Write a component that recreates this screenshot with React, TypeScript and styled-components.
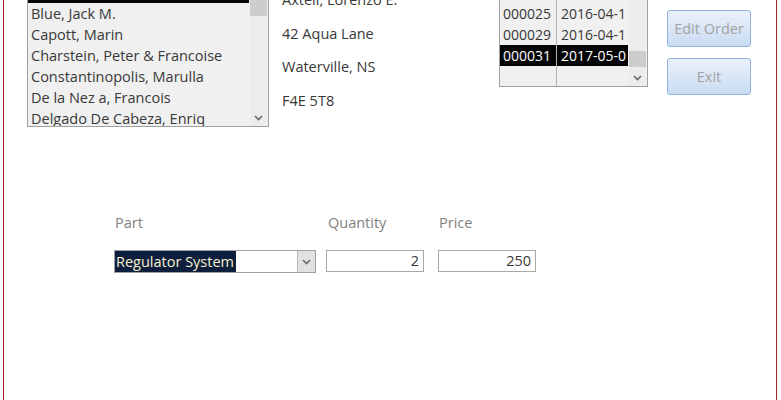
import React from "react";
import styled, { createGlobalStyle } from "styled-components";

const Global = createGlobalStyle`
  html, body { margin: 0; padding: 0; background: #ffffff; }
  body { font-family: "Open Sans", "Noto Sans", sans-serif; }
  * { box-sizing: border-box; }
`;

const Page = styled.div`
  width: 781px;
  height: 400px;
  overflow: hidden;
  background: #ffffff;
`;

const Form = styled.div`
  margin: 0 4px 0 3px;
  height: 400px;
  border-left: 1px solid #9e2a2a;
  border-right: 1px solid #9e2a2a;
  overflow: hidden;
`;

const Scrolled = styled.div`
  margin-top: -19px;
`;

const TopRow = styled.div`
  display: flex;
  align-items: flex-start;
  padding-left: 23px;
`;

const ListBox = styled.div<{ $w: number; $h: number }>`
  position: relative;
  width: ${(p) => p.$w}px;
  height: ${(p) => p.$h}px;
  border: 1px solid #a0a0a0;
  background: #f0f0f0;
  overflow: hidden;
  display: flex;
`;

const ListRows = styled.div`
  flex: 1;
  min-width: 0;
  padding-top: 0;
  overflow: hidden;
`;

const NameRow = styled.div<{ $sel?: boolean }>`
  height: 21px;
  line-height: 21px;
  padding-left: 3px;
  font-size: 14.5px;
  white-space: nowrap;
  color: ${(p) => (p.$sel ? "#ffffff" : "#383838")};
  background: ${(p) => (p.$sel ? "#050505" : "transparent")};
`;

const ScrollBar = styled.div`
  width: 17px;
  flex: none;
  margin: 0 1px 0 1px;
  background: #ececec;
  display: flex;
  flex-direction: column;
  justify-content: space-between;
`;

const Thumb = styled.div<{ $top: number }>`
  margin-top: ${(p) => p.$top}px;
  height: 16px;
  background: #cdcdcd;
`;

const ArrowBox = styled.div`
  height: 17px;
  display: flex;
  align-items: center;
  justify-content: center;
`;

const Chevron = () => (
  <svg width="9" height="6" viewBox="0 0 9 6">
    <path d="M1 1 L4.5 4.5 L8 1" fill="none" stroke="#6a6a6a" strokeWidth="1.6" />
  </svg>
);

const Address = styled.div`
  width: 217px;
  margin-left: 13px;
  padding-top: 2px;
  display: flex;
  flex-direction: column;
`;

const AddrLine = styled.div`
  height: 33.5px;
  line-height: 33.5px;
  font-size: 14.5px;
  color: #383838;
  white-space: nowrap;
`;

const OrderRow = styled.div<{ $sel?: boolean }>`
  display: grid;
  grid-template-columns: 57px 1fr;
  height: 21px;
  line-height: 21px;
  font-size: 14px;
  white-space: nowrap;
  color: ${(p) => (p.$sel ? "#ffffff" : "#383838")};
  background: ${(p) => (p.$sel ? "#050505" : "transparent")};
`;

const OrderCell = styled.span<{ $first?: boolean }>`
  overflow: hidden;
  padding-left: ${(p) => (p.$first ? 3 : 4)}px;
  border-right: ${(p) => (p.$first ? "1px solid #b4b4b4" : "none")};
`;

const ButtonCol = styled.div`
  margin-left: 19px;
  margin-top: 29px;
  display: flex;
  flex-direction: column;
  gap: 11px;
`;

const Button = styled.button`
  width: 84px;
  height: 37px;
  border: 1px solid #93b3dc;
  border-radius: 3px;
  background: linear-gradient(#eaf1fb, #c9dbf2);
  color: #a3a3a3;
  font-family: "Open Sans", sans-serif;
  font-size: 14.5px;
  padding: 0;
`;

const LineGrid = styled.div`
  margin-top: 86px;
  padding-left: 110px;
  display: grid;
  grid-template-columns: 212px 112px 98px;
  row-gap: 17px;
`;

const Label = styled.div<{ $pad: number }>`
  height: 20px;
  line-height: 20px;
  padding-left: ${(p) => p.$pad}px;
  font-size: 14.5px;
  color: #7f7f7f;
`;

const Combo = styled.div`
  width: 202px;
  height: 23px;
  border: 1px solid #a0a0a0;
  background: #ffffff;
  display: flex;
  align-items: stretch;
`;

const ComboText = styled.div`
  flex: 1;
  display: flex;
`;

const Highlight = styled.span`
  background: #0e1f3e;
  color: #f7f1cd;
  font-size: 14.5px;
  line-height: 21px;
  padding-right: 2px;
  padding-left: 1px;
  white-space: nowrap;
`;

const DropButton = styled.div`
  width: 18px;
  background: #e1e1e1;
  border-left: 1px solid #b9b9b9;
  display: flex;
  align-items: center;
  justify-content: center;
`;

const NumBox = styled.div`
  width: 98px;
  height: 22px;
  border: 1px solid #a9a9a9;
  background: #ffffff;
  text-align: right;
  padding-right: 4px;
  font-size: 14.5px;
  line-height: 20px;
  color: #383838;
`;

const names = [
  "Axtell, Lorenzo E.",
  "Blue, Jack M.",
  "Capott, Marin",
  "Charstein, Peter & Francoise",
  "Constantinopolis, Marulla",
  "De la Nez a, Francois",
  "Delgado De Cabeza, Enriq",
];

const orders: [string, string][] = [
  ["000018", "2016-03-2"],
  ["000025", "2016-04-1"],
  ["000029", "2016-04-1"],
  ["000031", "2017-05-0"],
  ["", ""],
];

export default function App() {
  return (
    <Page>
      <Global />
      <Form>
        <Scrolled>
          <TopRow>
            <ListBox $w={242} $h={146}>
              <ListRows>
                {names.map((n, i) => (
                  <NameRow key={n} $sel={i === 0}>
                    {n}
                  </NameRow>
                ))}
              </ListRows>
              <ScrollBar>
                <Thumb $top={18} />
                <ArrowBox>
                  <Chevron />
                </ArrowBox>
              </ScrollBar>
            </ListBox>
            <Address>
              <AddrLine>Axtell, Lorenzo E.</AddrLine>
              <AddrLine>42 Aqua Lane</AddrLine>
              <AddrLine>Waterville, NS</AddrLine>
              <AddrLine>F4E 5T8</AddrLine>
            </Address>
            <ListBox $w={149} $h={106}>
              <ListRows>
                {orders.map(([id, d], i) => (
                  <OrderRow key={i} $sel={i === 3}>
                    <OrderCell $first>{id}</OrderCell>
                    <OrderCell>{d}</OrderCell>
                  </OrderRow>
                ))}
              </ListRows>
              <ScrollBar>
                <Thumb $top={69} />
                <ArrowBox>
                  <Chevron />
                </ArrowBox>
              </ScrollBar>
            </ListBox>
            <ButtonCol>
              <Button disabled>Edit Order</Button>
              <Button disabled>Exit</Button>
            </ButtonCol>
          </TopRow>
          <LineGrid>
            <Label $pad={1}>Part</Label>
            <Label $pad={2}>Quantity</Label>
            <Label $pad={1}>Price</Label>
            <Combo>
              <ComboText>
                <Highlight>Regulator System</Highlight>
              </ComboText>
              <DropButton>
                <Chevron />
              </DropButton>
            </Combo>
            <NumBox>2</NumBox>
            <NumBox>250</NumBox>
          </LineGrid>
        </Scrolled>
      </Form>
    </Page>
  );
}
